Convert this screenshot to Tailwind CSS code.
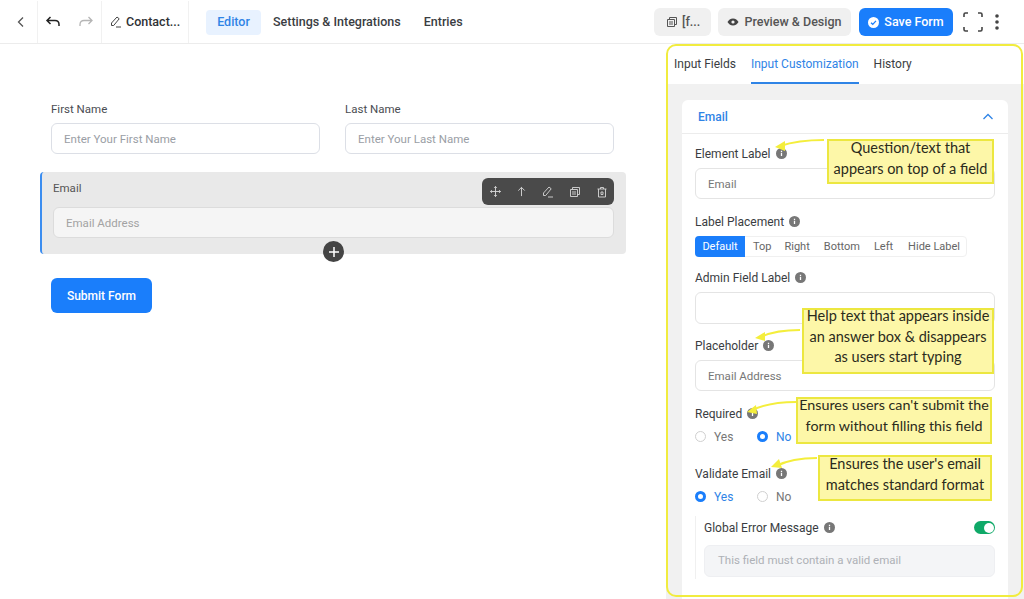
<!DOCTYPE html>
<html lang="en">
<head>
<meta charset="UTF-8">
<title>Form Editor</title>
<script src="https://cdn.jsdelivr.net/npm/@tailwindcss/browser@4"></script>
</head>
<body class="bg-white font-['Roboto',sans-serif] text-[#3a3d42]">
<div class="relative w-[1024px] h-[599px] overflow-hidden">

  <!-- Header -->
  <header class="flex items-center h-[44px] pt-px border-b border-[#ececec] text-[12.500px] font-medium">
    <div class="flex items-center justify-center w-[38px] h-full border-r border-[#f1f1f1]">
      <svg class="w-3.5 h-3.5 ml-1 text-[#555]" fill="none" stroke="currentColor" stroke-width="1.300" viewBox="0 0 14 14"><path d="M9 2.500 4.500 7 9 11.500"/></svg>
    </div>
    <div class="flex items-center h-full w-[64px] pl-[7px] gap-[17px] border-r border-[#f1f1f1]">
      <svg class="w-4 h-4 text-[#222]" fill="none" stroke="currentColor" stroke-width="1.500" viewBox="0 0 16 16"><path d="M5.500 3 2 6.500 5.500 10M2 6.500h8c2.500 0 4 1.300 4 4v1.500"/></svg>
      <svg class="w-4 h-4 text-[#b5b5b5]" fill="none" stroke="currentColor" stroke-width="1.300" viewBox="0 0 16 16"><path d="M10.500 3 14 6.500 10.500 10M14 6.500H6c-2.500 0-4 1.300-4 4v1.500"/></svg>
    </div>
    <div class="flex items-center h-full w-[87px] pl-[8px] gap-[4px] border-r border-[#f1f1f1] text-[#2f3235]">
      <svg class="w-3 h-3 text-[#444] shrink-0" fill="none" stroke="currentColor" stroke-width="1" viewBox="0 0 12 12"><path d="M1.500 9.500V7L7 1l2.200 1.800L3.700 9.500zM6 11h5"/></svg>
      <span>Contact...</span>
    </div>
    <nav class="flex items-center ml-[17px] gap-3">
      <span class="flex items-center h-[25px] w-[55px] justify-center rounded bg-[#e8f2ff] text-[#2f84e6]">Editor</span>
      <span>Settings &amp; Integrations</span>
      <span class="ml-[11px]">Entries</span>
    </nav>
    <div class="flex items-center ml-auto gap-2 pr-[25px]">
      <span class="flex items-center gap-[4px] h-[28px] w-[57px] -mr-px pl-3 rounded-md bg-[#f0f0f0] text-[#555]">
        <svg class="w-3 h-3 shrink-0" fill="none" stroke="currentColor" stroke-width="1" viewBox="0 0 12 12"><path d="M1.500 3.500h7v7h-7zM3.500 3.500v-2h7v7h-2M3 6h4M3 8h4"/></svg>[f...
      </span>
      <span class="flex items-center justify-center gap-[5px] h-[28px] w-[133px] rounded-md bg-[#f0f0f0] text-[#555]">
        <svg class="w-3 h-3" viewBox="0 0 12 12"><path fill="#444" d="M6 2.500C3.500 2.500 1.500 4.200.5 6c1 1.800 3 3.500 5.500 3.500s4.500-1.700 5.500-3.500c-1-1.800-3-3.500-5.500-3.500z"/><circle cx="6" cy="6" r="1.600" fill="#f0f0f0"/></svg>
        Preview &amp; Design
      </span>
      <span class="flex items-center justify-center gap-[5px] h-[28px] w-[94px] rounded-md bg-[#1a7efb] text-white">
        <svg class="w-[11px] h-[11px]" viewBox="0 0 12 12"><circle cx="6" cy="6" r="6" fill="#fff"/><path d="M3.300 6.200 5.200 8l3.500-3.800" fill="none" stroke="#1a7efb" stroke-width="1.400"/></svg>
        Save Form
      </span>
      <svg class="w-[20px] h-[20px] ml-[2px] text-[#444]" fill="none" stroke="currentColor" stroke-width="1.600" viewBox="0 0 20 20"><path d="M1 5V2.500C1 1.700 1.700 1 2.500 1H5M15 1h2.500c.8 0 1.500.7 1.500 1.500V5M19 15v2.500c0 .8-.7 1.500-1.500 1.500H15M5 19H2.500C1.700 19 1 18.300 1 17.500V15"/></svg>
      <svg class="w-1 h-[16px] ml-[4px] text-[#444]" fill="currentColor" viewBox="0 0 4 16"><circle cx="2" cy="2" r="1.800"/><circle cx="2" cy="8" r="1.800"/><circle cx="2" cy="14" r="1.800"/></svg>
    </div>
  </header>

  <div class="flex h-[555px]">
    <!-- Form canvas -->
    <main class="w-[666px] shrink-0 pl-[40px] pt-[57px] text-[11.500px]">
      <div class="flex gap-[25px] pl-[11px]">
        <div class="w-[269px]">
          <p class="h-[22px] text-[#4a4d52]">First Name</p>
          <div class="flex items-center h-[31px] pt-[2px] px-3 rounded-md border border-[#dcdfe6] text-[#9a9ea5]">Enter Your First Name</div>
        </div>
        <div class="w-[269px]">
          <p class="h-[22px] text-[#4a4d52]">Last Name</p>
          <div class="flex items-center h-[31px] pt-[2px] px-3 rounded-md border border-[#dcdfe6] text-[#9a9ea5]">Enter Your Last Name</div>
        </div>
      </div>
      <div class="relative w-[586px] h-[82px] mt-[18px] pl-[11px] pr-[12px] pt-[8px] rounded-sm bg-[#e9e9e9] border-l-2 border-[#3b8df0]">
        <p class="h-[27px] text-[#555]">Email</p>
        <div class="flex items-center h-[31px] pt-[2px] px-3 rounded-md border border-[#dcdcdc] bg-[#f5f5f5] text-[#a3a3a3]">Email Address</div>
        <div class="absolute right-[12px] top-[6px] flex items-center gap-[15px] w-[132px] h-[27px] pl-[8px] rounded-md bg-[#4a4a4a] text-[#d8d8d8]">
          <svg class="w-[11px] h-[11px]" fill="none" stroke="currentColor" viewBox="0 0 12 12"><path d="M6 .5v11M.5 6h11M4.500 2 6 .5 7.500 2M4.500 10 6 11.500 7.500 10M2 4.500.5 6 2 7.500M10 4.500 11.500 6 10 7.500"/></svg>
          <svg class="w-[11px] h-[11px]" fill="none" stroke="currentColor" viewBox="0 0 12 12"><path d="M6 11V1.500M2.500 5 6 1.500 9.500 5"/></svg>
          <svg class="w-[12px] h-[12px]" fill="none" stroke="currentColor" stroke-width=".9" viewBox="0 0 12 12"><path d="M1.500 9.500V7L7 1l2.200 1.800L3.700 9.500zM6 11h5"/></svg>
          <svg class="w-[12px] h-[12px]" fill="none" stroke="currentColor" stroke-width=".9" viewBox="0 0 12 12"><path d="M1.500 3.500h7v7h-7zM3.500 3.500v-2h7v7h-2M3 6h4M3 8h4"/></svg>
          <svg class="w-[12px] h-[12px]" fill="none" stroke="currentColor" stroke-width=".9" viewBox="0 0 12 12"><path d="M2.500 3v8h7V3M1.500 3h9M4.500 3V1.500h3V3M5 6h2v2.500H5z"/></svg>
        </div>
        <div class="absolute left-[281px] top-[69px] flex items-center justify-center w-[21px] h-[21px] rounded-full bg-[#444] text-white">
          <svg class="w-[10px] h-[10px]" fill="none" stroke="currentColor" stroke-width="1.500" viewBox="0 0 10 10"><path d="M5 0v10M0 5h10"/></svg>
        </div>
      </div>
      <button class="flex items-center justify-center w-[101px] h-[35px] mt-[24px] ml-[11px] rounded-md bg-[#1a7efb] text-white text-[12px] font-medium">Submit Form</button>
    </main>

    <!-- Settings panel -->
    <aside class="w-[358px] shrink-0 flex flex-col text-[12px] overflow-hidden">
      <div class="flex gap-[15px] h-[40px] pl-2 font-[450] bg-white">
        <span class="pt-[11px]">Input Fields</span>
        <span class="h-[40px] pt-[11px] border-b-2 border-[#2f84e6] text-[#2f84e6]">Input Customization</span>
        <span class="pt-[11px]">History</span>
      </div>
      <div class="flex-1 bg-[#f1f1f1] pt-4 pl-4 pr-[16px]">
        <div class="bg-white rounded-t-md h-[500px]">
          <div class="flex items-center justify-between h-[34px] pl-4 pr-[14px] border-b border-[#ececec] font-medium text-[#2f84e6]">
            Email
            <svg class="w-[12px] h-[12px]" fill="none" stroke="currentColor" stroke-width="1.300" viewBox="0 0 12 12"><path d="M1.500 8 6 3.500 10.500 8"/></svg>
          </div>
          <div class="pl-[13px] pr-[13px] pt-[11px]">
            <p class="flex items-center gap-[5px] h-[17px] font-[450]">Element Label
              <svg class="w-[11px] h-[11px]" viewBox="0 0 12 12"><circle cx="6" cy="6" r="6" fill="#777"/><path d="M6 5.300v3.500M6 3v1.300" stroke="#fff" stroke-width="1.400"/></svg>
            </p>
            <div class="flex items-center h-[31px] mt-[6px] pt-[2px] px-3 rounded-md border border-[#e4e4e4] text-[11.500px] text-[#777]">Email</div>

            <p class="flex items-center gap-[5px] h-[17px] mt-[14px] font-[450]">Label Placement
              <svg class="w-[11px] h-[11px]" viewBox="0 0 12 12"><circle cx="6" cy="6" r="6" fill="#777"/><path d="M6 5.300v3.500M6 3v1.300" stroke="#fff" stroke-width="1.400"/></svg>
            </p>
            <div class="flex items-center w-[272px] h-[21px] mt-[6px] pt-px rounded-sm border border-[#f0f0f0] text-[11px] text-[#666] whitespace-nowrap">
              <span class="flex items-center justify-center h-[21px] w-[50px] -ml-px -mt-px pt-px rounded-l-sm bg-[#1a7efb] text-white">Default</span>
              <span class="ml-[8px]">Top</span>
              <span class="ml-[13px]">Right</span>
              <span class="ml-[14px]">Bottom</span>
              <span class="ml-[14px]">Left</span>
              <span class="ml-[15px]">Hide Label</span>
            </div>

            <p class="flex items-center gap-[5px] h-[17px] mt-[12px] font-[450]">Admin Field Label
              <svg class="w-[11px] h-[11px]" viewBox="0 0 12 12"><circle cx="6" cy="6" r="6" fill="#777"/><path d="M6 5.300v3.500M6 3v1.300" stroke="#fff" stroke-width="1.400"/></svg>
            </p>
            <div class="h-[32px] mt-[6px] rounded-md border border-[#e4e4e4]"></div>

            <p class="flex items-center gap-[5px] h-[17px] mt-[13px] font-[450]">Placeholder
              <svg class="w-[11px] h-[11px]" viewBox="0 0 12 12"><circle cx="6" cy="6" r="6" fill="#777"/><path d="M6 5.300v3.500M6 3v1.300" stroke="#fff" stroke-width="1.400"/></svg>
            </p>
            <div class="flex items-center h-[31px] mt-[6px] pt-[2px] px-3 rounded-md border border-[#e4e4e4] text-[11.500px] text-[#777]">Email Address</div>

            <p class="flex items-center gap-[5px] h-[17px] mt-[14px] font-[450]">Required
              <svg class="w-[11px] h-[11px]" viewBox="0 0 12 12"><circle cx="6" cy="6" r="6" fill="#777"/><path d="M6 5.300v3.500M6 3v1.300" stroke="#fff" stroke-width="1.400"/></svg>
            </p>
            <div class="flex items-center h-[17px] mt-[6px] font-[450]">
              <span class="w-[11px] h-[11px] rounded-full border border-[#d0d0d0]"></span>
              <span class="ml-[8px] w-[43px] text-[#777]">Yes</span>
              <span class="w-[11px] h-[11px] rounded-full border-[3px] border-[#1a7efb]"></span>
              <span class="ml-[8px] text-[#2f84e6]">No</span>
            </div>

            <p class="flex items-center gap-[5px] h-[17px] mt-[20px] font-[450]">Validate Email
              <svg class="w-[11px] h-[11px]" viewBox="0 0 12 12"><circle cx="6" cy="6" r="6" fill="#777"/><path d="M6 5.300v3.500M6 3v1.300" stroke="#fff" stroke-width="1.400"/></svg>
            </p>
            <div class="flex items-center h-[17px] mt-[6px] font-[450]">
              <span class="w-[11px] h-[11px] rounded-full border-[3px] border-[#1a7efb]"></span>
              <span class="ml-[8px] w-[43px] text-[#2f84e6]">Yes</span>
              <span class="w-[11px] h-[11px] rounded-full border border-[#d0d0d0]"></span>
              <span class="ml-[8px] text-[#777]">No</span>
            </div>

            <div class="mt-[11px] pl-2 pt-[3px] pb-[2px] border-l border-[#f0f0f0]">
              <div class="flex items-center h-[17px] font-[450]">
                <span class="flex items-center gap-[5px]">Global Error Message
                  <svg class="w-[11px] h-[11px]" viewBox="0 0 12 12"><circle cx="6" cy="6" r="6" fill="#777"/><path d="M6 5.300v3.500M6 3v1.300" stroke="#fff" stroke-width="1.400"/></svg>
                </span>
                <span class="flex items-center justify-end ml-auto w-[21px] h-[13px] pr-[1px] rounded-full bg-[#0fa968]">
                  <span class="w-[10px] h-[10px] rounded-full bg-white"></span>
                </span>
              </div>
              <div class="flex items-center h-[32px] mt-[9px] px-[13px] rounded-md bg-[#f4f5f7] border border-[#eeeff2] text-[11.500px] text-[#aeb1b6]">This field must contain a valid email</div>
            </div>
          </div>
        </div>
      </div>
    </aside>
  </div>

  <!-- Annotation overlay -->
  <div class="absolute left-[666px] top-[44px] w-[357px] h-[553px] rounded-[10px] border-[2px] border-[#f1ec3f] pointer-events-none"></div>
  <svg class="absolute left-0 top-0 w-[1024px] h-[599px] pointer-events-none" fill="none" viewBox="0 0 1024 599">
    <path d="M824 140c-16 0-32 2-44 6" stroke="#f4ee3c" stroke-width="2"/><path d="M775 147l10-6 0 10z" fill="#f4ee3c"/>
    <path d="M800 330c-16 0-29 2-39 7" stroke="#f4ee3c" stroke-width="2"/><path d="M755 338l10-6 0 9z" fill="#f4ee3c"/>
    <path d="M796 402c-18 0-33 3-44 8" stroke="#f4ee3c" stroke-width="2"/><path d="M747 412l9-7 1 9z" fill="#f4ee3c"/>
    <path d="M817 458c-18 0-31 3-41 8" stroke="#f4ee3c" stroke-width="2"/><path d="M771 467l8-8 3 9z" fill="#f4ee3c"/>
  </svg>
  <div class="absolute left-[827px] top-[139px] flex items-center justify-center w-[167px] h-[45px] pb-[6px] border-2 border-[#ece740] bg-[#fdf7a8] text-center font-['Lato',sans-serif] text-[14.500px] leading-[20.500px] text-[#2b2b1c] whitespace-nowrap">Question/text that<br>appears on top of a field</div>
  <div class="absolute left-[802px] top-[308px] flex items-center justify-center w-[192px] h-[66px] pb-[8px] border-2 border-[#ece740] bg-[#fdf7a8] text-center font-['Lato',sans-serif] text-[14.500px] leading-[20.500px] text-[#2b2b1c] whitespace-nowrap">Help text that appears inside<br>an answer box &amp; disappears<br>as users start typing</div>
  <div class="absolute left-[796px] top-[397px] flex items-center justify-center w-[196px] h-[47px] pb-[10px] border-2 border-[#ece740] bg-[#fdf7a8] text-center font-['Lato',sans-serif] text-[14.300px] leading-[20.500px] text-[#2b2b1c] whitespace-nowrap">Ensures users can't submit the<br>form without filling this field</div>
  <div class="absolute left-[818px] top-[455px] flex items-center justify-center w-[174px] h-[46px] pb-[7px] border-2 border-[#ece740] bg-[#fdf7a8] text-center font-['Lato',sans-serif] text-[14.500px] leading-[20.500px] text-[#2b2b1c] whitespace-nowrap">Ensures the user's email<br>matches standard format</div>
</div>
</body>
</html>
